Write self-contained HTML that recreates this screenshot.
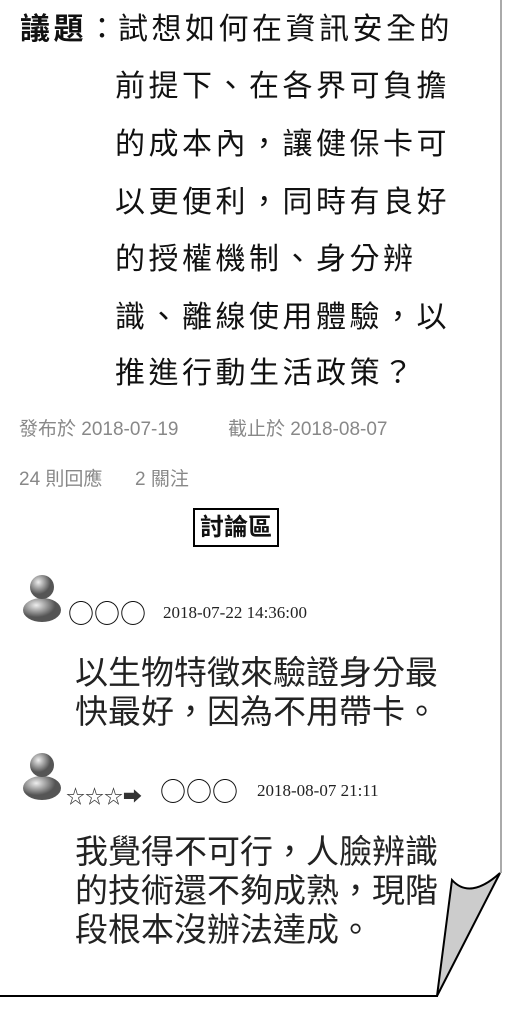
<!DOCTYPE html>
<html><head><meta charset="utf-8"><style>
body{margin:0;width:505px;height:1020px;background:#fff;position:relative;overflow:hidden;font-family:"Liberation Sans","Noto Sans CJK TC",sans-serif;color:#111}
.a{position:absolute;white-space:nowrap}
.h{font-size:30px;letter-spacing:3.5px;line-height:32px}
.m{color:#888;font-size:19px}
.c{font-size:33px;line-height:39px;left:75px;color:#222}
.d{font-family:"Liberation Serif","Noto Serif CJK SC",serif;font-size:17px;color:#222}
.o{font-family:"Noto Sans CJK TC",sans-serif;font-size:26px}
</style></head><body>
<div class="a" style="left:500px;top:0;width:2px;height:873px;background:#aaa"></div>
<div class="a h" style="left:20px;top:14px"><b>議題</b>：</div>
<div class="a h" style="left:118px;top:14px">試想如何在資訊安全的</div>
<div class="a h" style="left:115px;top:71px">前提下、在各界可負擔</div>
<div class="a h" style="left:115px;top:129px">的成本內，讓健保卡可</div>
<div class="a h" style="left:115px;top:187px">以更便利，同時有良好</div>
<div class="a h" style="left:115px;top:244px">的授權機制、身分辨</div>
<div class="a h" style="left:115px;top:302px">識、離線使用體驗，以</div>
<div class="a h" style="left:115px;top:358px">推進行動生活政策？</div>
<div class="a m" style="left:19px;top:414px">發布於 2018-07-19</div>
<div class="a m" style="left:228px;top:414px">截止於 2018-08-07</div>
<div class="a m" style="left:19px;top:464px">24 則回應</div>
<div class="a m" style="left:135px;top:464px">2 關注</div>
<div class="a" style="left:193px;top:508px;width:82px;height:35px;border:2px solid #000;font-size:24px;font-weight:bold;line-height:35px;text-align:center">討論區</div>
<svg class="a" style="left:22px;top:572px" width="42" height="50"><defs><radialGradient id="g" cx="35%" cy="30%"><stop offset="0" stop-color="#eee"/><stop offset="1" stop-color="#555"/></radialGradient></defs><ellipse cx="20" cy="38" rx="19" ry="12" fill="url(#g)"/><circle cx="20" cy="15" r="12" fill="url(#g)"/></svg>
<div class="a o" style="left:68px;top:594px">○○○</div>
<div class="a d" style="left:163px;top:603px">2018-07-22 14:36:00</div>
<div class="a c" style="top:653px">以生物特徵來驗證身分最<br>快最好，因為不用帶卡。</div>
<svg class="a" style="left:22px;top:750px" width="42" height="50"><ellipse cx="20" cy="38" rx="19" ry="12" fill="url(#g)"/><circle cx="20" cy="15" r="12" fill="url(#g)"/></svg>
<div class="a" style="left:66px;top:782px;font-size:19px;color:#333">☆☆☆➡</div>
<div class="a o" style="left:160px;top:772px">○○○</div>
<div class="a d" style="left:257px;top:781px">2018-08-07 21:11</div>
<div class="a c" style="top:832px">我覺得不可行，人臉辨識<br>的技術還不夠成熟，現階<br>段根本沒辦法達成。</div>
<div class="a" style="left:0;top:995px;width:438px;height:2px;background:#000"></div>
<svg class="a" style="left:430px;top:865px" width="75" height="135"><path d="M7 131 L22 15 Q40 35 70 8 Z" fill="#ccc" stroke="#000" stroke-width="2"/></svg>
</body></html>
